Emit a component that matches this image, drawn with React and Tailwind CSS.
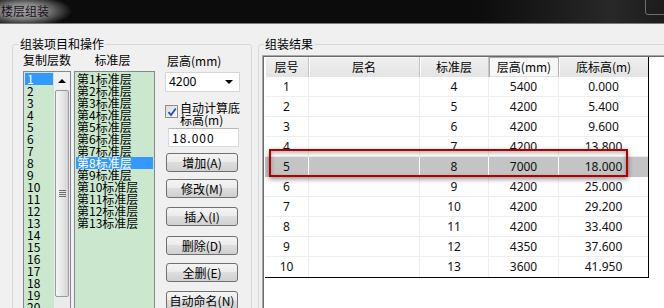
export default function App() {
  const rows = [
    [1, 4, 5400, "0.000"],
    [2, 5, 4200, "5.400"],
    [3, 6, 4200, "9.600"],
    [4, 7, 4200, "13.800"],
    [5, 8, 7000, "18.000"],
    [6, 9, 4200, "25.000"],
    [7, 10, 4200, "29.200"],
    [8, 11, 4200, "33.400"],
    [9, 12, 4350, "37.600"],
    [10, 13, 3600, "41.950"],
  ];
  const counts = Array.from({ length: 20 }, (_, i) => i + 1);
  const std = Array.from({ length: 13 }, (_, i) => `第${i + 1}标准层`);
  const cols = ["w-[44px]", "w-[111px]", "w-[69px]", "w-[70px]", "w-[89px]"];
  const btn =
    "ml-[1px] w-[72px] h-[19px] border border-[#707070] rounded-[3px] bg-[linear-gradient(#f4f4f4,#ececec_45%,#dedede_50%,#d0d0d0)] flex items-center justify-center leading-[12px] text-[12px]";

  return (
    <div className="w-[664px] h-[308px] overflow-hidden bg-[#f0f0f0] font-['Noto_Sans_CJK_SC',sans-serif] text-[12px] text-black relative">
      {/* title bar */}
      <div className="h-[24px] relative border-b border-[#7a7a7a] bg-[linear-gradient(90deg,#0c0c0c_0%,#0c0c0c_72%,#282828_92%,#1c1c1c_100%)]">
        <div className="absolute left-0 top-0 h-[23px] w-[90px] bg-[radial-gradient(ellipse_48px_16px_at_24px_11px,#a4a4a4_0%,#858585_45%,rgba(20,20,20,0)_100%)]" />
        <div className="relative pl-[1px] pt-[4px] leading-[14px] text-[12px] text-[#1c0f22]">楼层组装</div>
        <div className="absolute right-[-2px] top-[-3px] w-[21px] h-[18px] border border-[#6f6f6f] rounded-[3px]" />
      </div>

      <div className="flex pl-[12px] mt-[13px]">
        {/* left group */}
        <fieldset className="w-[240px] h-[300px] border border-[#d3d9de] rounded-[3px] shrink-0">
          <legend className="ml-[6px] px-[1px] leading-[14px] text-[12px]">组装项目和操作</legend>
          <div className="flex items-start pl-[10px] pt-[2px]">
            {/* col 1 */}
            <div className="w-[48px] flex flex-col">
              <div className="h-[18px] leading-[14px]">复制层数</div>
              <div className="h-[240px] border border-[#828790] bg-[#cbe8cf] flex">
                <div className="flex-1 pt-[1px] px-[1px]">
                  {counts.map((n) => (
                    <div
                      key={n}
                      className={
                        "h-[12px] leading-[12px] pl-[2px] " +
                        (n === 1 ? "bg-[#3399ff] text-white" : "")
                      }
                    >
                      {n}
                    </div>
                  ))}
                </div>
                <div className="w-[16px] flex flex-col bg-[#ebebeb]">
                  <div className="h-[17px] flex items-center justify-center bg-[#f0f0f0]">
                    <div className="w-0 h-0 border-l-[4px] border-r-[4px] border-b-[4px] border-l-transparent border-r-transparent border-b-black" />
                  </div>
                  <div className="mt-[1px] mx-[1px] h-[207px] rounded-[2px] border border-[#9a9a9a] bg-[linear-gradient(90deg,#f5f5f5,#e6e6e6_55%,#d4d4d4)] flex flex-col items-center justify-center gap-[1px]">
                    <div className="w-[7px] h-[1px] bg-[#6e6e6e]" />
                    <div className="w-[7px] h-[1px] bg-[#6e6e6e]" />
                    <div className="w-[7px] h-[1px] bg-[#6e6e6e]" />
                    <div className="w-[7px] h-[1px] bg-[#6e6e6e]" />
                  </div>
                </div>
              </div>
            </div>
            {/* col 2 */}
            <div className="ml-[3px] w-[81px] flex flex-col">
              <div className="h-[18px] leading-[14px] text-center pr-[4px]">标准层</div>
              <div className="h-[240px] border border-[#828790] bg-[#cbe8cf] pt-[1px] px-[1px]">
                {std.map((s, i) => (
                  <div
                    key={s}
                    className={
                      "h-[12px] leading-[12px] pl-[1px] whitespace-nowrap " +
                      (i === 7 ? "bg-[#3399ff] text-white" : "")
                    }
                  >
                    {s}
                  </div>
                ))}
              </div>
            </div>
            {/* col 3 */}
            <div className="ml-[10px] w-[76px] flex flex-col">
              <div className="h-[18px] leading-[14px] pl-[2px] pt-[1px]">层高(mm)</div>
              <div className="mt-[1px] w-[75px] h-[20px] border border-[#d6d6d6] bg-white flex items-center justify-between pl-[3px] pr-[6px] font-['Noto_Sans',sans-serif] text-[12px]">
                <span>4200</span>
                <div className="w-0 h-0 border-l-[4px] border-r-[4px] border-t-[4px] border-l-transparent border-r-transparent border-t-black" />
              </div>
              <div className="mt-[10px] flex items-start">
                <div className="mt-[3px] w-[13px] h-[13px] border border-[#8e8f8f] bg-[linear-gradient(135deg,#dcdcdc,#f7f7f7)] flex items-center justify-center">
                  <svg width="10" height="10" viewBox="0 0 10 10">
                    <path d="M1.5 5.2 L4 8 L8.8 1.5" fill="none" stroke="#2a4fa8" strokeWidth="1.8" />
                  </svg>
                </div>
                <div className="ml-[2px] leading-[12px] whitespace-nowrap">
                  <div>自动计算底</div>
                  <div>标高(m)</div>
                </div>
              </div>
              <div className="mt-[2px] ml-[3px] w-[71px] h-[19px] border border-[#dadada] border-t-[#b8b8b8] bg-white pl-[3px] leading-[17px] tracking-[1px]">
                18.000
              </div>
              <div className={btn + " mt-[6px]"}>增加(A)</div>
              <div className={btn + " mt-[7px]"}>修改(M)</div>
              <div className={btn + " mt-[9px]"}>插入(I)</div>
              <div className={btn + " mt-[10px]"}>删除(D)</div>
              <div className={btn + " mt-[8px]"}>全删(E)</div>
              <div className={btn + " mt-[9px]"}>自动命名(N)</div>
            </div>
          </div>
        </fieldset>

        {/* right group */}
        <fieldset className="ml-[6px] w-[430px] h-[300px] border border-[#d3d9de] rounded-[3px] shrink-0">
          <legend className="ml-[5px] px-[1px] leading-[14px] text-[12px]">组装结果</legend>
          <div className="pl-[4px] pt-[5px]">
            <div className="h-[260px] bg-white border-l border-t border-[#6a6a6a] shadow-[-1px_-1px_0_#a8a8a8] pl-[1px] font-['Noto_Sans','Noto_Sans_CJK_SC',sans-serif] text-[12px]">
              <div className="w-[384px] border-r border-b border-black">
                {/* header */}
                <div className="flex h-[20px]">
                  {["层号", "层名", "标准层", "层高(mm)", "底标高(m)"].map((h, i) => (
                    <div
                      key={h}
                      className={
                        cols[i] +
                        " h-[20px] flex items-center justify-center border-r leading-[14px] font-['Noto_Sans_CJK_SC',sans-serif] " +
                        (i === 3
                          ? "bg-[#f7f7f7] border border-[#a9a9a9] border-b-[#e0e0e0]"
                          : "bg-[linear-gradient(#efefef,#e4e4e4)] border-[#c4c4c4] shadow-[inset_1px_0_0_#ffffff,inset_0_1px_0_#f8f8f8]") +
                        (i === 4 ? " border-r-0" : "")
                      }
                    >
                      {h}
                    </div>
                  ))}
                </div>
                {rows.map((r, ri) => {
                  const hl = ri === 4;
                  const last = ri === rows.length - 1;
                  const cells = [r[0], "", r[1], r[2], r[3]];
                  return (
                    <div
                      key={ri}
                      className={
                        "flex h-[20px] " +
                        (hl ? "bg-[#c4c4c4] " : "") +
                        (last ? "" : hl ? "border-b border-[#c4c4c4]" : "border-b border-[#eeeeee]")
                      }
                    >
                      {cells.map((c, ci) => (
                        <div
                          key={ci}
                          className={
                            cols[ci] +
                            " flex items-center justify-center text-[#111] " +
                            (ci < 4 ? (hl ? "border-r border-white" : "border-r border-[#eeeeee]") : "")
                          }
                        >
                          {c}
                        </div>
                      ))}
                    </div>
                  );
                })}
              </div>
            </div>
          </div>
        </fieldset>
      </div>

      {/* red highlight frame */}
      <div className="absolute left-[269px] top-[149px] w-[359px] h-[28px] border-2 border-[#b00000] shadow-[0_2px_5px_rgba(0,0,0,0.45),inset_0_2px_4px_rgba(0,0,0,0.3)]" />
    </div>
  );
}
